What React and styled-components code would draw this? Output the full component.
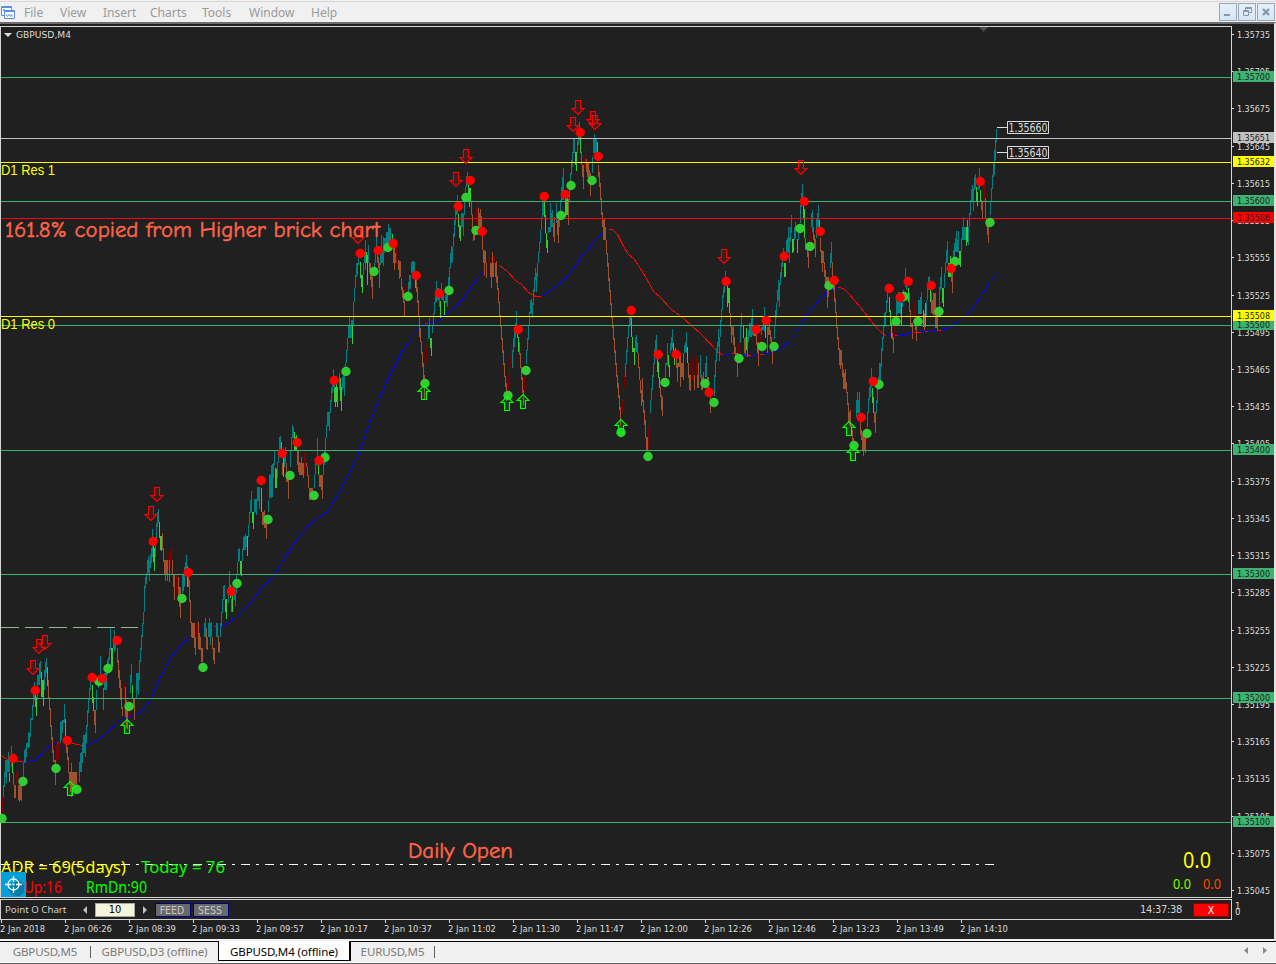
import styled, { createGlobalStyle } from "styled-components";

const GlobalStyle = createGlobalStyle`
  body {
    margin: 0;
    background: #f0f0f0;
    font-family: "DejaVu Sans Condensed", "DejaVu Sans", sans-serif;
  }
`;

const Window = styled.div`
  width: 1276px;
  height: 964px;
  display: flex;
  flex-direction: column;
  overflow: hidden;
  background: #f0f0f0;
`;
const MenuBar = styled.div`
  height: 22px;
  box-sizing: border-box;
  border-top: 1px solid #f0f0f0;
  box-shadow: inset 0 1px 0 #d8d8d8;
  display: flex;
  align-items: center;
  flex: none;
  padding: 1px 1px 0 1px;
  font-family: "Noto Sans", "Open Sans", sans-serif;
  font-size: 12px;
  color: #9a9a9a;
`;
const MenuItem = styled.div`
  width: ${(p) => p.$w}px;
  white-space: nowrap;
`;
const LogoBox = styled.div`
  width: 23px;
  height: 16px;
`;
const WindowButtons = styled.div`
  margin-left: auto;
  display: flex;
  gap: 1px;
`;
const WindowButton = styled.div`
  width: 18px;
  height: 18px;
  box-sizing: border-box;
  border: 1px solid #98a8b9;
  background: linear-gradient(#e6f0fa, #d6e6f5);
  display: flex;
`;
const Workspace = styled.div`
  height: 917px;
  flex: none;
  box-sizing: border-box;
  border-top: 2px solid #6c6c6c;
  border-right: 2px solid #e3e3e3;
  background: #202020;
  padding-top: 2px;
  display: flex;
  flex-direction: column;
`;
const ChartRow = styled.div`
  display: flex;
  height: 872px;
`;
const ChartFrame = styled.div`
  position: relative;
  width: 1232px;
  height: 872px;
  box-sizing: border-box;
  flex: none;
`;
const ChartSvg = styled.svg`
  display: block;
`;
const PriceScale = styled.div`
  position: relative;
  flex: 1;
  font-size: 9.5px;
  color: #dcdcdc;
`;
const PriceLabel = styled.div`
  height: 37.22px;
  line-height: 18px;
  display: flex;
  gap: 3px;
  &::before {
    content: "";
    width: 2px;
    height: 1px;
    margin-top: 8px;
    background: #dcdcdc;
  }
`;
const PriceText = styled.svg`
  display: block;
  width: 36px;
  height: 18px;
`;
const PriceBadge = styled.div`
  position: absolute;
  left: 1px;
  right: 0;
  top: ${(p) => p.$y}px;
  height: 11px;
  background: ${(p) => p.$bg};
  color: #202020;
  padding-left: 4px;
`;
const BadgeText = styled.svg`
  display: block;
  width: 36px;
  height: 11px;
`;
const PanelRow = styled.div`
  display: flex;
  margin-top: 1px;
  height: 21px;
`;
const Panel = styled.div`
  width: 1232px;
  box-sizing: border-box;
  border: 1px solid #d3d3d3;
  display: flex;
  align-items: center;
  padding: 0 2px 0 4px;
  font-size: 10.5px;
  color: #d3d3d3;
`;
const PanelTitle = styled.div`
  width: 78px;
  font-size: 9.7px;
  font-family: "Noto Sans", sans-serif;
  white-space: nowrap;
`;
const Spin = styled.div`
  width: 0;
  height: 0;
  border: 4px solid transparent;
  ${(p) =>
    p.$dir === "left"
      ? "border-left-width: 0; border-right-color: #c0c0c0;"
      : "border-right-width: 0; border-left-color: #c0c0c0; margin-right: 8px;"}
`;
const CountField = styled.div`
  width: 40px;
  height: 14px;
  box-sizing: border-box;
  border: 1px solid #a8a8a8;
  margin: 0 8px;
  background: #f5f5dc;
  color: #000;
  text-align: center;
  line-height: 12px;
  font-size: 11px;
`;
const PanelButton = styled.div`
  width: 36px;
  height: 14px;
  box-sizing: border-box;
  border: 1px solid #000080;
  margin-right: 2px;
  background: #696969;
  color: #c8c8c8;
  text-align: center;
  line-height: 12px;
  padding-right: 2px;
`;
const Clock = styled.div`
  margin-left: auto;
  width: 53px;
  font-size: 11px;
  letter-spacing: -0.3px;
`;
const CloseButton = styled.div`
  width: 36px;
  height: 14px;
  box-sizing: border-box;
  border: 1px solid #8b0000;
  background: #ff0000;
  color: #fff;
  text-align: center;
  line-height: 12px;
`;
const PanelScale = styled.div`
  font-size: 9.5px;
  line-height: 6px;
  color: #dcdcdc;
  padding: 4px 0 0 3px;
`;
const TimeScale = styled.div`
  display: grid;
  grid-template-columns: repeat(20, 64px);
  height: 19px;
  width: 1272px;
  overflow: hidden;
`;
const TimeLabel = styled.div`
  color: #dcdcdc;
  &::before {
    content: "";
    display: block;
    width: 1px;
    height: 3px;
    margin-left: 1px;
    background: #dcdcdc;
  }
`;
const TimeText = styled.svg`
  display: block;
  width: 60px;
  height: 14px;
`;
const TabBar = styled.div`
  height: 22px;
  margin-top: 2px;
  box-sizing: border-box;
  border-top: 1px solid #000;
  border-bottom: 1px solid #fff;
  background: #f0f0f0;
  display: flex;
  font-family: "Noto Sans", "Open Sans", sans-serif;
  font-size: 11.5px;
  letter-spacing: -0.1px;
  color: #7a7a7a;
`;
const Tab = styled.div`
  width: ${(p) => p.$w}px;
  box-sizing: border-box;
  height: 19px;
  display: flex;
  justify-content: center;
  align-items: center;
  white-space: nowrap;
  ${(p) =>
    p.$active &&
    `
    background: #fff;
    color: #000;
    border: solid #000;
    border-width: 0 2px 1px 1px;
    margin-top: -1px;
    height: 20px;
    padding-top: 2px;
  `}
`;
const TabDivider = styled.div`
  width: 1px;
  height: 12px;
  margin-top: 4px;
  background: #606060;
`;
const TabArrows = styled.div`
  margin-left: auto;
  display: flex;
  gap: 15px;
  padding: 5px 9px 0 0;
`;
const BottomEdge = styled.div`
  height: 1px;
  flex: none;
  background: #5a6060;
`;

const COLORS = { t: "#008080", s: "#a0522d", g: "#32cd32", m: "#800000" };

// Price bars, grouped by chart section. Each entry is colour + x,high,low,
// counted in thirds of a pixel from the section's origin.
const SECTIONS = [
  {
    ox: 0,
    oy: 600,
    bars:
      "m6,592,640 t10,555,592 t13,515,560 t17,480,530 t20,480,550 t24,455,515 t27,480,515 g29,520,545 t33,438,500 g37,490,520 s40,515,555 s44,555,595 s47,555,595 m50,512,550 m53,512,555 s56,555,600 s59,555,606 s62,555,600 s65,555,602 t69,490,530 t73,450,490 t76,445,485 t79,430,470 t84,395,445 t88,400,440 t92,355,410 t96,315,360 t99,285,320 t102,245,300 g106,270,320 g109,290,348 t113,225,300 t117,190,255 t121,183,235 g125,215,290 g129,240,318 t133,210,270 t136,185,230 t139,175,220 g142,200,258 s145,240,295 s148,290,330 s151,325,380 s154,375,420 s157,410,460 s160,450,485 s166,480,555 m169,430,485 m172,430,482 m175,430,480 m177,400,440 t180,365,430 t184,363,420 t188,360,400 t193,312,370 g196,357,410 s200,410,460 s203,440,480 s206,470,520 s209,515,555 s214,490,590 s211,515,575 s217,515,570 s220,515,560 s223,515,556 s226,515,556 s229,515,556 m232,510,556 t238,485,545 t241,460,515 t244,455,515 t248,430,490 t251,405,460 t256,400,470 t259,375,430 t262,330,380 t265,295,340 t268,265,300 t271,240,270 g277,255,310 g280,290,333 s283,330,375 s286,330,400 t290,270,330 t295,225,265 t301,168,230 s310,265,330 t314,220,270 t318,215,270 t322,180,225 t325,170,200 t328,145,180 t331,82,150 g334,145,200 g337,145,200 t340,110,145 t343,90,155 t347,120,150 s352,145,190 s355,180,235 s358,210,265 s361,240,300 s364,265,328 s367,320,347 m373,252,300 s376,260,350 s379,300,385 s382,320,386 m386,300,350 t390,225,280 t393,192,250 g397,255,295 s400,295,325 s403,295,360 t409,220,295 t412,220,270 t415,220,285 t418,180,240 t421,145,185 t424,105,150 t427,70,110 t430,35,72 t433,-20,37",
  },
  {
    ox: 130,
    oy: 460,
    bars:
      "t43,378,420 t46,350,385 t49,340,372 t52,300,345 t55,288,340 t58,303,362 t61,282,325 t64,265,310 t67,207,290 g70,255,305 g72,265,332 t76,230,290 t79,190,250 t82,155,200 t85,147,190 g88,185,233 g91,228,270 g94,228,273 s97,220,270 s100,265,305 s103,300,345 s106,300,362 s109,300,345 s112,300,362 m116,280,330 s118,300,365 m121,267,305 m124,267,305 s127,300,345 s130,345,380 s134,345,420 m138,345,400 m142,325,380 s145,352,415 s148,380,440 s151,380,473 t157,345,400 t160,345,392 t163,320,380 t166,305,345 t169,285,340 g172,318,380 s175,350,380 s178,360,427 s181,420,490 s184,486,530 s187,490,535 s190,488,535 s193,490,565 s196,530,585 m199,490,530 m202,468,530 s205,485,568 s208,520,570 s212,530,570 s215,565,605 s218,565,605 m220,530,610 t223,490,530 t226,473,530 s229,505,568 s232,530,570 t235,490,530 t238,475,530 t241,488,555 t244,485,530 s247,530,568 s250,563,600 s253,565,612 m256,540,580 t260,488,530 t263,490,530 s265,528,575 s268,545,578 t271,490,530 t274,455,497 t277,418,458 t280,378,420 t283,375,418 g287,418,455 g290,418,476 t294,380,430 t297,333,380 g301,375,415 s305,418,455 g307,400,455 t312,380,420 t316,400,437 t319,345,400 t322,305,345 t325,268,305 t328,265,303 g331,303,345 g334,303,347 t337,265,303 t340,230,270 t343,228,270 t346,222,270 t349,228,260 g352,228,287 t355,192,230 t358,155,192 t361,120,160 t364,93,157 g367,155,190 g370,155,208 t374,118,160 t377,118,155 t380,116,165 t383,80,122 t386,80,122 t389,80,148 g393,85,155 s397,155,195 s400,155,195 s403,150,205 s406,165,205 s409,165,237 t415,120,157 t418,78,118 t421,42,80 t424,40,80 t427,40,112",
  },
  {
    ox: 240,
    oy: 220,
    bars:
      "t88,765,830 t91,765,830 t94,735,835 t97,733,800 t100,730,775 t103,690,735 g106,745,803 g109,748,803 t113,725,775 t116,690,730 t119,650,695 t122,648,690 g125,665,700 g130,700,770 s128,730,765 t134,700,740 t137,680,730 s140,730,785 s145,770,837 t152,690,740 t155,650,690 t158,615,655 t161,620,655 g164,635,690 g167,650,690 g170,645,690 s173,690,735 s176,690,755 s179,725,765 s182,728,765 s185,710,765 s189,730,775 m192,700,765 m195,700,765 s198,728,740 s201,740,768 s204,765,805 s207,803,840 s210,803,840 s213,803,840 s216,803,840 m220,820,855 t223,765,805 t227,728,765 t232,655,735 g235,730,765 s238,765,800 s241,765,800 s244,765,810 s247,765,837 t250,725,765 t253,690,735 t255,680,725 t257,655,690 t260,615,655 t263,577,618 t266,575,618 t269,575,632 t271,540,580 t274,505,545 t277,490,520 t280,447,500 t283,470,505 g284,503,545 g287,500,562 g290,490,545 g293,500,562 t297,460,510 g301,475,542 g304,500,572 t307,470,510 t310,455,505 t313,455,527 t316,430,460 t318,390,430 t321,355,392 t324,318,355 t327,290,355 t330,315,355 t333,318,355 g337,317,373 t334,300,318 t341,245,315 t344,205,245 t347,165,205 t350,130,170 t353,130,165 t356,105,135 g361,125,175 g364,165,200 g367,165,218 t370,130,165 t373,95,130 t376,60,150 g379,95,130 g382,105,195 t385,75,130 s388,130,150 s391,130,180 s394,160,200 s397,170,237 t402,130,150 t405,90,130 t408,45,100 s412,90,130 s415,110,145 s418,130,205 t422,90,135 t425,45,130 t428,90,130 t431,50,137 t434,55,100 t440,35,80 t443,35,70 t446,12,70 t451,25,80 g457,42,75 s461,80,130 s464,85,150 s467,100,130 m470,80,132 s474,120,150 s477,122,177 s480,122,170 s484,175,210 s487,200,235 s490,210,250 s493,243,292 m499,195,225 m502,200,225 t505,185,215 t508,165,208 t511,165,208 t514,125,160 t517,122,158 t520,123,158 t523,125,160 g526,175,205 s529,175,215 s532,200,248 s535,240,290 s538,290,350 s541,325,365 s544,362,402 s547,395,440 s550,430,480 s553,465,540 m556,415,465 m559,375,430 m562,350,385 t565,318,358 t568,295,355 g571,355,385 g574,355,407 t577,315,340 t580,280,318 t583,245,282 t586,210,250 t590,183,245 t594,205,240 t597,220,260 g600,243,293 t605,190,240 t609,220,245 g612,243,285 t617,225,250 t622,210,262 t625,170,210 t628,140,205 t631,100,145 t634,78,130 t637,80,125 t640,40,82 t643,10,50 t646,-18,15",
  },
  {
    ox: 420,
    oy: 90,
    bars:
      "t104,390,430 t107,350,400 t110,340,375 t112,315,372 g116,372,410 g119,405,445 g121,408,453 t124,370,410 t127,370,412 t130,372,437 t133,335,375 t137,290,335 t140,258,290 t142,245,285 g146,285,330 g149,293,350 g152,293,335 s155,332,375 s158,372,430 s161,410,452 s164,410,450 m168,350,400 m172,318,372 s176,355,410 s179,370,415 s182,358,412 s185,378,420 s187,435,480 s190,480,520 s193,480,558 s196,482,520 s200,518,565 m204,500,520 m208,468,520 s212,518,560 s215,520,593 s218,487,560 s221,520,562 m224,498,522 s227,520,560 s230,513,580 s233,558,600 s236,595,640 s239,635,680 s242,675,710 s245,705,750 s248,745,790 s251,780,825 s254,820,862 s257,858,890 s260,880,932 m264,855,905 m267,830,870 m270,795,835 m273,762,800 t277,780,835 t280,745,785 t283,725,770 t286,700,745 t289,662,710 g292,730,745 g295,740,785 s298,755,795 s301,790,835 s304,830,870 s307,860,910 s310,900,945 m313,860,905 t320,780,822 t323,745,782 t326,705,750 t329,665,708 t332,630,672 t335,628,668 t338,640,685 t341,598,645 t344,562,605 t347,535,570 t350,550,605 t353,520,560 t356,485,520 t359,455,490 t362,420,460 t365,380,420 t368,340,380 t371,335,375 g373,335,380 g376,375,430 g379,430,475 g382,450,490 t386,410,430 t391,340,425 t394,370,410 t397,360,412 s400,400,440 s403,380,455 t409,340,400 s412,390,435 s415,385,458 t419,370,410 t422,330,375 t425,290,335 t428,260,330 t431,233,330 g437,325,380 g440,320,375 g443,325,375 s446,328,405 t449,290,335 t452,250,290 t455,210,255 t458,185,230 t461,145,190 t464,147,188 g467,185,225 g470,185,242 t473,150,190 t475,115,165 t478,95,150 g481,130,190 s485,185,225 s488,225,260 s490,225,296 m495,160,230 m492,200,235 s499,207,245 s502,220,262 s505,215,265 s508,240,282 s511,250,317 t517,200,250 t520,145,190 t523,132,190 t526,145,190 t529,145,200 g532,155,192 s536,225,260 s539,245,290 s542,280,330 s545,325,375 s548,365,412 s551,390,450 s554,388,450 s557,410,450 s560,450,492 s563,490,530 s566,520,572 s569,565,605 s572,600,645 s575,640,685 s578,680,715 s581,705,750 s584,745,790 s587,780,825 s590,820,860 s593,855,895 s596,880,925 s599,915,960 s602,950,1008 m607,930,970 m610,890,935 m613,855,895 t616,820,860 t619,780,822 t622,740,785 t625,705,745 t628,680,710 t631,680,708 g635,685,740 g638,740,785 g642,775,824 t646,740,780 t649,735,785 s652,760,790 s655,790,835 s658,830,870 s661,870,910 s664,900,948 s667,865,935 s670,930,970 s673,960,1005 s676,990,1045 s679,1042,1080 s682,1042,1080 m685,1010,1078 m688,970,1015 t691,930,970 t694,895,930 t697,855,900 t700,820,860 t703,780,822 t706,750,785 t709,735,780",
  },
  {
    ox: 600,
    oy: 220,
    bars:
      "g173,405,455 g176,425,475 g179,470,505 s182,500,530 s185,525,570 s187,530,587 m190,480,530 m193,470,500 t197,430,470 t202,370,435 g205,405,440 g208,435,470 t212,370,400 t214,350,390 t217,328,385 g220,370,410 g223,390,435 g226,385,415 s229,400,445 s232,430,486 s238,395,440 s242,400,500 s245,430,470 s249,400,480 t253,375,400 t256,365,395 t259,336,400 g263,380,430 s266,430,475 s269,465,510 s272,465,512 m277,412,480 m280,465,500 s283,465,510 m289,408,470 s292,465,505 s295,430,505 t301,405,470 s304,465,510 s307,470,510 s311,455,500 t315,430,470 t319,407,470 s322,470,510 s326,470,520 s330,530,578 m334,500,540 t343,465,528 t346,420,470 t349,385,425 t352,365,400 t355,328,380 t358,350,423 t362,300,350 t365,268,305 t368,225,270 t371,200,235 t374,180,220 t377,153,190 g381,195,260 g384,205,250 g387,205,280 s391,280,320 s394,315,370 s397,320,345 s400,315,375 s404,350,400 s407,380,420 s411,400,470 m415,370,410 m418,350,380 t421,315,370 t425,278,320 g431,318,355 s434,355,400 g439,325,390 s442,350,410 s436,350,405 t446,330,365 t449,310,350 t453,295,350 t457,267,345 s461,320,348 s464,320,348 s469,335,375 s472,365,400 s475,365,437 m480,340,370 t485,320,345 t490,290,330 t493,262,335 g497,310,355 s502,320,398 s507,305,345 s510,330,365 s513,350,395 s517,385,433 m520,355,380 t523,315,357",
  },
  {
    ox: 760,
    oy: 110,
    bars:
      "t46,600,645 t49,580,625 t52,540,580 t55,510,570 t58,520,590 t61,485,525 t64,460,505 t67,430,470 t70,415,450 g73,460,500 g76,460,500 t80,390,430 t83,385,425 t86,350,430 t89,380,458 t92,350,395 t95,315,370 g98,388,430 g101,388,425 t104,350,390 t107,335,385 g111,388,430 t114,350,390 t120,285,340 t123,250,290 t127,222,280 g131,285,325 g134,297,385 s137,385,420 s141,410,440 s144,425,473 m151,350,400 t154,310,350 t157,300,365 s161,350,390 s164,375,415 s167,388,440 t170,325,385 t173,310,350 t176,285,350 g179,330,360 s182,385,425 s185,420,460 s187,422,487 s190,422,460 s194,455,500 s197,480,520 s201,500,593 s204,500,560 m208,460,520 t211,430,475 t214,397,460 s217,455,500 s220,510,540 s223,525,575 s226,565,610 s229,605,655 s232,650,690 s235,680,720 s238,715,765 s241,720,777 s244,720,765 s247,758,800 s250,780,838 s253,790,838 s256,778,838 s259,815,850 s262,845,885 s265,880,935 s268,905,945 s271,900,950 s274,940,970 s277,960,1000 s280,985,1015 m285,935,985 t289,870,920 t292,845,908 t295,870,910 t298,845,910 s302,930,975 s305,960,990 s308,975,1022 s311,975,1038 s314,975,1022 s317,975,1030 m320,945,1000 t323,905,950 t326,865,908 t329,830,870 t332,820,860 t335,773,830 g338,835,880 g341,860,910 s344,905,940 s347,905,968 t350,870,910 t353,825,880 t356,800,840 t359,758,825 t362,758,810 t365,715,770 t368,680,722 t371,645,688 t374,610,650 t377,605,645 t380,570,610 t383,545,580 g388,560,605 g391,600,645 g394,640,685 s397,670,690 s400,680,728 m403,640,680 t408,570,620 t411,570,612 t414,545,610 t417,545,610 t420,570,612 g424,580,645 t427,545,590 t430,540,575 t436,473,530 t439,500,540 g445,535,575 s449,550,605 s452,600,650 s456,640,687 m463,575,640 s466,640,660 s469,640,692 m474,605,640 t476,570,612 t480,560,612 t484,545,612 g489,600,650 s493,610,660 g495,580,650 t498,570,620 t501,530,570 t504,500,540 t507,498,540 g511,520,575 s515,545,610 s518,570,612 s521,550,615 s525,550,655 s528,615,655 s532,620,660 t537,530,600 t540,500,540 t543,470,535 g547,535,580 g550,535,592 t553,490,535 t556,455,490 t559,420,460 t562,393,460 g566,460,500 g570,438,500 s573,490,515 s577,480,548 t580,420,470 t583,400,450 t586,385,425 t589,363,425 t592,390,425 t595,363,425 g599,423,465 g602,423,470 t605,385,425 t608,350,390 t611,320,390 t614,350,390 t617,350,390 g620,350,407 g623,330,395 t626,350,405 t629,310,350 t632,270,315 t635,237,275 t638,225,275 t641,235,303 t644,200,240 t646,192,235 g650,230,275 g653,245,288 t656,205,240 t659,175,238 g662,240,275 s665,270,300 s668,275,328 m671,225,275 m674,215,275 s676,265,325 s680,325,350 s683,345,375 s686,345,398 m688,315,345 t692,275,315 t695,235,275 t698,195,238 t701,160,200 t704,120,195 t707,90,150 t709,57,95",
  },
];

const bars = SECTIONS.flatMap(({ ox, oy, bars: list }) =>
  list.split(" ").map((item) => {
    const [x, hi, lo] = item.slice(1).split(",").map(Number);
    const y = Math.round(oy + hi / 3);
    return {
      fill: COLORS[item[0]],
      x: ox + Math.floor(x / 3),
      y,
      h: Math.max(1, Math.round(oy + lo / 3) - y),
    };
  })
);

// One-pixel holes between neighbours of the same trend are closed with
// the range that both share.
const joints = bars.flatMap((b, i) => {
  const next = bars[i + 1];
  if (!next || next.fill !== b.fill || next.x - b.x !== 2) return [];
  const y = Math.max(b.y, next.y);
  const end = Math.min(b.y + b.h, next.y + next.h);
  return end > y ? [{ fill: b.fill, x: b.x + 1, y, h: end - y }] : [];
});

const UP_MA = [
  "25,762 36,759 44,750 52,743 57,742",
  "85,745 95,741 107,732 116,722 124,718 130,716 140,712 148,703 155,688 161,674 171,656 180,645 190,636",
  "200,630 210,627 224,625 237,616 248,605 262,587 273,575 287,553 297,538 310,523 320,516 327,511 335,498 347,477 359,451 373,412 387,380 402,350 412,337 420,325 426,323 437,321 447,313 455,307 467,292 477,278 485,270 492,266",
  "540,296 552,289 563,280 573,268 583,253 597,238 603,231",
  "723,355 732,353 745,355 760,354 767,353 780,349 790,340 800,325 807,313 820,298 830,289 838,287",
  "886,335 900,335 912,332 927,331 940,330 948,327 960,320 973,307 982,293 990,282 996,273",
];
const DOWN_MA = [
  "1,755 5,758 12,760 20,761 25,762",
  "57,742 60,743",
  "67,741 76,744 83,745",
  "213,626 217,626",
  "424,323 427,323",
  "499,265 507,271 515,280 521,284 528,292 535,296 540,296",
  "608,229 612,229 617,234 623,246 628,254 633,258 638,265 643,273 647,280 653,291 660,297 671,309 683,318 700,333 717,351 723,355",
  "732,353 737,354",
  "746,355 750,355",
  "759,354 763,354",
  "838,287 843,288 848,293 860,307 867,316 875,326 883,334 886,335",
  "894,335 897,335",
  "913,332 920,332",
  "924,331 927,331",
  "936,330 940,330",
];

const LOWS = [
  [2, 818], [23, 781], [56, 768], [77, 789], [99, 681], [108, 668], [129, 706], [182, 598], [203, 667],
  [237, 583], [268, 519], [290, 475], [314, 495], [325, 457], [346, 371], [374, 271], [388, 247], [408, 296],
  [425, 383], [449, 290], [466, 197], [476, 230], [508, 395], [526, 370], [561, 215], [571, 185], [592, 180],
  [621, 432], [648, 456], [665, 382], [705, 383], [714, 402], [739, 358], [762, 346], [774, 346], [800, 228],
  [810, 246], [829, 285], [854, 445], [867, 433], [879, 384], [896, 321], [904, 296], [918, 321], [939, 311],
  [955, 261], [990, 222],
];
const HIGHS = [
  [13, 758], [35, 690], [67, 740], [117, 640], [92, 677], [102, 678], [153, 541], [188, 572], [231, 591],
  [261, 480], [282, 453], [297, 442], [319, 460], [334, 380], [360, 253], [378, 250], [393, 243], [416, 275],
  [439, 293], [458, 206], [470, 180], [482, 231], [518, 329], [544, 196], [565, 194], [580, 132], [598, 156],
  [631, 310], [658, 354], [676, 354], [709, 392], [726, 281], [756, 329], [766, 320], [784, 256], [804, 201],
  [820, 231], [834, 280], [861, 417], [873, 381], [889, 288], [900, 297], [908, 281], [931, 285], [951, 268],
  [980, 181],
];
const SELL = [
  [33, 660], [39, 639], [45, 635], [151, 506], [157, 487], [358, 229], [456, 172], [466, 149], [573, 117],
  [578, 100], [593, 111], [595, 115], [724, 249], [801, 160],
];
const BUY = [
  [127, 719], [70, 781], [424, 385], [507, 396], [523, 394], [621, 419], [849, 421], [853, 446],
];

const LEVELS = [
  [77, "#3cb371"], [138, "#c0c0c0"], [162, "#ffff00"], [201, "#3cb371"], [218, "#ff0000"], [316, "#ffff00"],
  [325, "#3cb371"], [450, "#3cb371"], [574, "#3cb371"], [698, "#3cb371"], [822, "#3cb371"],
];
const BADGES = [
  [71, "1.35700", "#3cb371"], [132, "1.35651", "#c0c0c0"], [156, "1.35632", "#ffff00"], [195, "1.35600", "#3cb371"],
  [212, "1.35586", "#ff0000"], [319, "1.35500", "#3cb371"], [310, "1.35508", "#ffff00"], [444, "1.35400", "#3cb371"],
  [568, "1.35300", "#3cb371"], [692, "1.35200", "#3cb371"], [816, "1.35100", "#3cb371"],
];
const PRICES = Array.from({ length: 24 }, (_, i) => ((135735 - i * 30) / 100000).toFixed(5));
const TIMES = [
  "2018", "06:26", "08:39", "09:33", "09:57", "10:17", "10:37", "11:02", "11:30", "11:47", "12:00", "12:26",
  "12:46", "13:23", "13:49", "14:10",
];
const WINDOW_ICONS = [
  "M4 10.500h6M4 11.500h6",
  "M6.500 6V3.500h6v5H10M6.500 4.500h6M4.500 6.500h5v5h-5zM4.500 7.500h5",
  "M5 5l6 6M11 5l-6 6",
];
const COMIC = '"Comic Sans MS", "Comic Neue", "Noto Sans", sans-serif';
const ARIAL = '"Liberation Sans", sans-serif';
const TAHOMA = '"Noto Sans", "DejaVu Sans Condensed", sans-serif';
const SMALL = '"DejaVu Sans Condensed", sans-serif';

const ChartText = ({ x, y, w, size, fill, font = TAHOMA, bold = 0, children }) => (
  <text
    x={x}
    y={y}
    fontSize={size}
    fill={fill}
    stroke={bold ? fill : "none"}
    strokeWidth={bold}
    fontFamily={font}
    textLength={w}
    lengthAdjust="spacingAndGlyphs"
  >
    {children}
  </text>
);

const Bars = ({ items }) =>
  items.map((b, i) => <rect key={i} x={b.x} y={b.y} width="1" height={b.h} fill={b.fill} />);

const Arrows = ({ at, d, color }) => (
  <g fill={color} fillOpacity="0.14" stroke={color} strokeWidth="1.100">
    {at.map(([x, y]) => (
      <path key={`${x}-${y}`} transform={`translate(${x} ${y + 0.5})`} d={d} />
    ))}
  </g>
);

const Chart = () => (
  <ChartSvg width="1232" height="872" viewBox="0 26 1232 872">
    <rect x="0.5" y="26.5" width="1231" height="871" fill="none" stroke="#d3d3d3" />
    <path d="M979 27h9l-4.500 5z" fill="#4a4a4a" />
    <path d="M4 33h8l-4 4z" fill="#dcdcdc" />
    <ChartText x={16} y={38} w={55} size={9.5} fill="#dcdcdc" font={SMALL}>GBPUSD,M4</ChartText>
    <g shapeRendering="crispEdges">
      <g fill="none" transform="translate(0.5 0.5)">
        {UP_MA.map((p) => <polyline key={p} points={p} stroke="#0000ff" />)}
        {DOWN_MA.map((p) => <polyline key={p} points={p} stroke="#ff0000" />)}
      </g>
      <Bars items={joints} />
      <Bars items={bars} />
      {LEVELS.map(([y, c]) => <rect key={y} x="1" y={y} width="1230" height="1" fill={c} />)}
      <path d="M1 627.500H138" stroke="#8fbc8f" strokeDasharray="18 6" />
      <path d="M1 864.500H995" stroke="#fff" strokeDasharray="9 6 3 6" />
    </g>
    {LOWS.map(([x, y]) => <circle key={`${x}-${y}`} cx={x} cy={y + 0.5} r="4.700" fill="#32cd32" />)}
    {HIGHS.map(([x, y]) => <circle key={`${x}-${y}`} cx={x + 0.2} cy={y + 0.5} r="4.700" fill="#ff0000" />)}
    <Arrows at={SELL} color="#ff0000" d="M-2.500 0H2.500V8H6L0 14L-6 8H-2.500Z" />
    <Arrows at={BUY} color="#00ff00" d="M-2.500 14H2.500V6H6L0 0L-6 6H-2.500Z" />
    {[["1.35660", 127], ["1.35640", 152]].map(([label, y]) => (
      <g key={label}>
        <path d={`M997 ${y + 0.5}H1007M1007.500 ${y - 5.5}h41v12h-41z`} fill="none" stroke="#dcdcdc" />
        <ChartText x={1008.5} y={y + 5} w={39} size={11.5} fill="#dcdcdc" font={SMALL}>{label}</ChartText>
      </g>
    ))}
    <ChartText x={1} y={175} w={54} size={14} fill="#ffff00" font={ARIAL}>D1 Res 1</ChartText>
    <ChartText x={1} y={329} w={54} size={14} fill="#ffff00" font={ARIAL}>D1 Res 0</ChartText>
    <ChartText x={5} y={237} w={375} size={22.5} fill="#ff6347" font={COMIC} bold={0.5}>
      161.8% copied from Higher brick chart
    </ChartText>
    <ChartText x={408} y={858} w={105} size={22.5} fill="#ff6347" font={COMIC} bold={0.5}>Daily Open</ChartText>
    <ChartText x={1} y={873} w={125} size={16.5} fill="#ffff00">ADR = 69(5days)</ChartText>
    <ChartText x={141} y={873} w={84} size={16.5} fill="#00ff00">Today = 76</ChartText>
    <ChartText x={2} y={893} w={60} size={16} fill="#ff0000">RmUp:16</ChartText>
    <ChartText x={86} y={893} w={61} size={16} fill="#00ff00">RmDn:90</ChartText>
    <ChartText x={1183} y={868} w={28} size={21} fill="#ffff00">0.0</ChartText>
    <ChartText x={1173} y={889} w={18} size={14} fill="#7cfc00">0.0</ChartText>
    <ChartText x={1203} y={889} w={18} size={14} fill="#ff4500">0.0</ChartText>
    <rect x="1" y="872" width="25" height="25" fill="#049fd9" />
    <path d="M18 879l6 6v7l-4 4h-6l-6-6z" fill="#057ba8" />
    <g fill="none" stroke="#fff" strokeWidth="1.300">
      <circle cx="13.500" cy="884.500" r="5.500" />
      <path d="M13.500 876v6M13.500 887v6M5 884.500h6M16 884.500h6" />
    </g>
    <rect x="12.500" y="883.500" width="2" height="2" fill="#fff" />
  </ChartSvg>
);

const App = () => {
  return (
    <Window>
      <GlobalStyle />
      <MenuBar>
        <LogoBox>
          <svg width="16" height="16" viewBox="0 0 16 16" fill="#fff" stroke="#5b8fe0">
            <path d="M.5 2.500h10v9H.5zM.5 3.500h10" />
            <path d="M2 7l1-2 1 3 1-2" fill="none" />
            <path d="M3.500 6.500h10v8h-10zM3.500 7.500h10" />
            <path d="M5 10.500l1.500 2 1.500-2 1.500 2 1-2 1 2" fill="none" />
          </svg>
        </LogoBox>
        <MenuItem $w={36}>File</MenuItem>
        <MenuItem $w={43}>View</MenuItem>
        <MenuItem $w={47}>Insert</MenuItem>
        <MenuItem $w={52}>Charts</MenuItem>
        <MenuItem $w={47}>Tools</MenuItem>
        <MenuItem $w={62}>Window</MenuItem>
        <MenuItem $w={40}>Help</MenuItem>
        <WindowButtons>
          {WINDOW_ICONS.map((d, i) => (
            <WindowButton key={d}>
              <svg width="16" height="16" fill="none" stroke="#8797a8" strokeWidth={i === 2 ? 2.4 : 1}>
                <path d={d} />
              </svg>
            </WindowButton>
          ))}
        </WindowButtons>
      </MenuBar>
      <Workspace>
        <ChartRow>
          <ChartFrame>
            <Chart />
          </ChartFrame>
          <PriceScale>
            {PRICES.map((p) => (
              <PriceLabel key={p}>
                <PriceText>
                  <text x="0" y="12" fill="#dcdcdc" textLength="33" lengthAdjust="spacingAndGlyphs">{p}</text>
                </PriceText>
              </PriceLabel>
            ))}
            {BADGES.map(([y, label, bg]) => (
              <PriceBadge key={label} $y={y - 26} $bg={bg}>
                <BadgeText>
                  <text x="0" y="9" fill="#202020" textLength="33" lengthAdjust="spacingAndGlyphs">{label}</text>
                </BadgeText>
              </PriceBadge>
            ))}
          </PriceScale>
        </ChartRow>
        <PanelRow>
          <Panel>
            <PanelTitle>Point O Chart</PanelTitle>
            <Spin $dir="left" />
            <CountField>10</CountField>
            <Spin $dir="right" />
            <PanelButton>FEED</PanelButton>
            <PanelButton>SESS</PanelButton>
            <Clock>14:37:38</Clock>
            <CloseButton>X</CloseButton>
          </Panel>
          <PanelScale>
            <div>1</div>
            <div>0</div>
          </PanelScale>
        </PanelRow>
        <TimeScale>
          {TIMES.map((t) => (
            <TimeLabel key={t}>
              <TimeText>
                <text x="0" y="9" fontSize="9.500" fill="#dcdcdc" textLength={t === "2018" ? 45 : 48} lengthAdjust="spacingAndGlyphs">
                  2 Jan {t}
                </text>
              </TimeText>
            </TimeLabel>
          ))}
        </TimeScale>
      </Workspace>
      <TabBar>
        <Tab $w={90}>GBPUSD,M5</Tab>
        <TabDivider />
        <Tab $w={127}>GBPUSD,D3 (offline)</Tab>
        <Tab $w={133} $active>GBPUSD,M4 (offline)</Tab>
        <Tab $w={83}>EURUSD,M5</Tab>
        <TabDivider />
        <TabArrows>
          <svg width="4" height="7"><path d="M4 0v7L0 3.500z" fill="#8a8a8a" /></svg>
          <svg width="4" height="7"><path d="M0 0v7l4-3.500z" fill="#8a8a8a" /></svg>
        </TabArrows>
      </TabBar>
      <BottomEdge />
    </Window>
  );
};

export default App;
